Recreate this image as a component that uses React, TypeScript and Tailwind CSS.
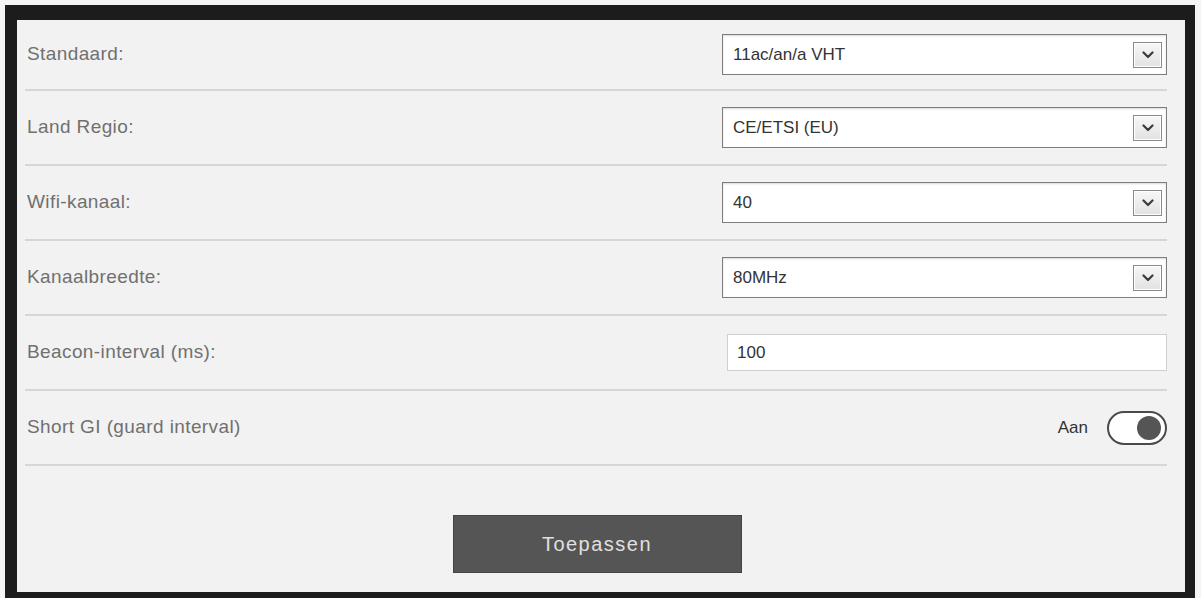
import { ReactNode } from "react";

type Row = { label: string; control: ReactNode };

function Chevron() {
  return (
    <span className="flex h-[26px] w-[29px] items-center justify-center border border-[#8a8a8a] bg-gradient-to-b from-[#f7f7f7] to-[#e2e2e2] shadow-[inset_0_0_0_1px_#ffffff]">
      <svg viewBox="0 0 12 8" className="h-[8px] w-[12px]">
        <path d="M1.5 1.5 L6 6 L10.5 1.5" fill="none" stroke="#3c3c3c" strokeWidth="2.2" strokeLinecap="round" strokeLinejoin="round" />
      </svg>
    </span>
  );
}

function Select({ value }: { value: string }) {
  return (
    <div className="flex h-[41px] w-[445px] items-center justify-between border border-[#7d7d7d] bg-white pl-[10px] pr-[4px] shadow-[inset_0_1px_2px_rgba(0,0,0,0.15)]">
      <span className="text-[17px] text-[#333]">{value}</span>
      <Chevron />
    </div>
  );
}

function Toggle({ label }: { label: string }) {
  return (
    <div className="flex items-center gap-[19px]">
      <span className="text-[17px] text-[#333]">{label}</span>
      <span className="flex h-[34px] w-[60px] items-center justify-end rounded-full border-2 border-[#4a4a4a] bg-white pr-[4px]">
        <span className="h-[24px] w-[24px] rounded-full bg-[#555]" />
      </span>
    </div>
  );
}

const rows: Row[] = [
  { label: "Standaard:", control: <Select value="11ac/an/a VHT" /> },
  { label: "Land Regio:", control: <Select value="CE/ETSI (EU)" /> },
  { label: "Wifi-kanaal:", control: <Select value="40" /> },
  { label: "Kanaalbreedte:", control: <Select value="80MHz" /> },
  {
    label: "Beacon-interval (ms):",
    control: (
      <div className="flex h-[37px] w-[440px] items-center border border-[#cfcfcf] bg-white pl-[9px] text-[17px] text-[#333]">
        100
      </div>
    ),
  },
  { label: "Short GI (guard interval)", control: <Toggle label="Aan" /> },
];

export default function App() {
  return (
    <div className="h-[598px] w-[1201px] bg-[#f4f4f4] pl-[5px] pr-[6px] pt-[5px]" style={{ fontFamily: "'Liberation Sans', Arial, sans-serif" }}>
      <div className="h-[593px] w-[1190px] border-b-[6px] border-l-[12px] border-r-[10px] border-t-[15px] border-[#1c1c1c] bg-[#f2f2f2]">
        <div className="pl-[8px] pr-[18px]">
          {rows.map((r, i) => (
            <div
              key={r.label}
              className={`flex items-center justify-between border-b-2 border-[#d6d6d6] ${i === 0 ? "h-[71px]" : "h-[75px]"}`}
            >
              <span className="pl-[2px] text-[19px] tracking-[0.4px] text-[#707070]">{r.label}</span>
              {r.control}
            </div>
          ))}
        </div>
        <div className="flex justify-center pr-[8px] pt-[49px]">
          <button className="h-[58px] w-[289px] border border-[#444] bg-[#555555] text-[20px] tracking-[1.5px] text-[#e0e0e0]">
            Toepassen
          </button>
        </div>
      </div>
    </div>
  );
}
